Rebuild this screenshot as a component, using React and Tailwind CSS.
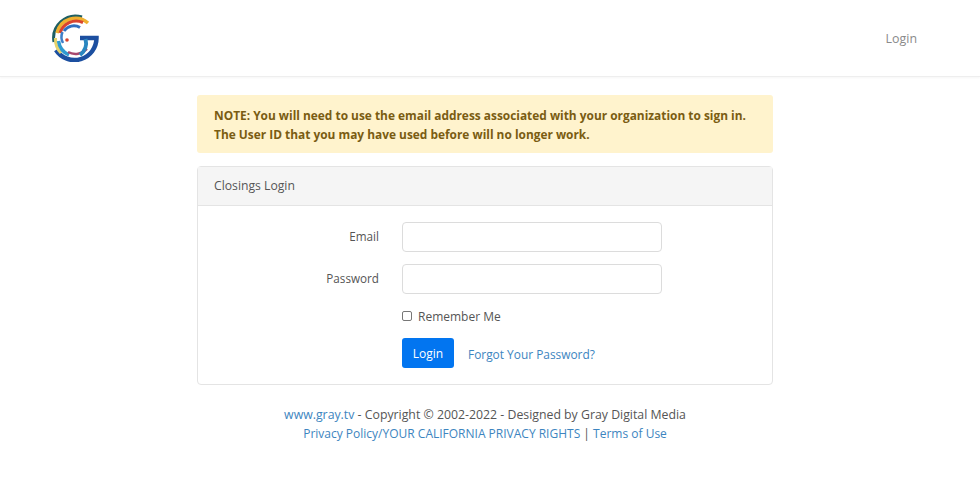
import React from "react";

function Logo() {
  return (
    <svg width="48" height="48" viewBox="0 0 48 48" fill="none" className="blur-[0.6px]">
      <path d="M5 36A22 22 0 0 0 45.5 24H29" stroke="#1c4fa0" strokeWidth="4.5" />
      <path d="M31 3A22 22 0 0 0 3 28" stroke="#1f5f62" strokeWidth="3" />
      <path d="M37 9A19 19 0 0 0 6 19" stroke="#efb030" strokeWidth="3.5" />
      <path d="M32 8.5A17 17 0 0 0 9 19" stroke="#d9432f" strokeWidth="3" />
      <path d="M29 13.5A12 12 0 0 0 13 17" stroke="#2f6fc0" strokeWidth="3" />
      <path d="M4.5 24A20 20 0 0 0 10 39" stroke="#e6d36a" strokeWidth="3" />
      <path d="M7.5 27A18 18 0 0 0 18 41" stroke="#2f9ad0" strokeWidth="3.5" />
      <path d="M11.5 18A13 13 0 0 0 12 29" stroke="#3f7fc8" strokeWidth="2.5" />
      <path d="M17 38A16 16 0 0 0 36 35" stroke="#a8486e" strokeWidth="2.5" />
      <path d="M34.5 25A15 15 0 0 1 29 41" stroke="#2a86c0" strokeWidth="4" />
      <circle cx="16" cy="26" r="1.8" fill="#d9432f" />
    </svg>
  );
}

function Field({ label }) {
  return (
    <div className="flex items-center h-[30px]">
      <label className="w-[181px] pb-[2px] text-right text-[11.7px] text-[#555]">{label}</label>
      <input className="ml-[23px] w-[260px] h-[30px] rounded-[4px] border border-[#dcdcdc] bg-white" />
    </div>
  );
}

export default function App() {
  return (
    <div className="w-[980px] h-[485px] bg-white overflow-hidden text-[12px] leading-[18px] text-[#555] font-['Open_Sans',sans-serif]">
      <header className="h-[77px] flex items-center justify-between pl-[51px] pr-[63px] border-b border-[#eeeeee] shadow-[0_1px_2px_rgba(0,0,0,0.04)]">
        <Logo />
        <a className="text-[#8a8a8a] mt-[1px] text-[12.4px]">Login</a>
      </header>

      <main className="w-[576px] ml-[197px] mt-[18px]">
        <div className="h-[58px] bg-[#fff3cd] rounded-[3px] px-[17px] py-[11px] font-bold text-[11.9px] text-[#7a5c12] whitespace-nowrap">
          <p className="leading-[19px]">NOTE: You will need to use the email address associated with your organization to sign in.</p>
          <p className="leading-[19px]">The User ID that you may have used before will no longer work.</p>
        </div>

        <section className="mt-[13px] h-[219px] border border-[#e4e4e4] rounded-[4px]">
          <div className="h-[39px] flex items-center px-[16px] bg-[#f5f5f5] border-b border-[#e4e4e4] text-[12.2px]">
            Closings Login
          </div>
          <div className="pt-[16px] flex flex-col">
            <Field label="Email" />
            <div className="mt-[12px]">
              <Field label="Password" />
            </div>
            <div className="mt-[14px] ml-[204px] flex items-center">
              <span className="w-[10px] h-[10px] mb-[2px] border border-[#777] rounded-[2px]" />
              <span className="ml-[6px]">Remember Me</span>
            </div>
            <div className="mt-[12px] ml-[204px] flex items-center">
              <button className="w-[52px] h-[30px] pt-[2px] rounded-[3px] bg-[#0275f0] text-white">Login</button>
              <a className="ml-[14px] pt-[2px] text-[11.9px] text-[#3d85c0]">Forgot Your Password?</a>
            </div>
          </div>
        </section>

        <footer className="mt-[20px] text-center leading-[19px]">
          <p className="text-[12.3px]">
            <a className="text-[#3d85c0]">www.gray.tv</a> - Copyright © 2002-2022 - Designed by Gray Digital Media
          </p>
          <p>
            <a className="text-[#3d85c0]">Privacy Policy/YOUR CALIFORNIA PRIVACY RIGHTS</a> | <a className="text-[#3d85c0]">Terms of Use</a>
          </p>
        </footer>
      </main>
    </div>
  );
}
